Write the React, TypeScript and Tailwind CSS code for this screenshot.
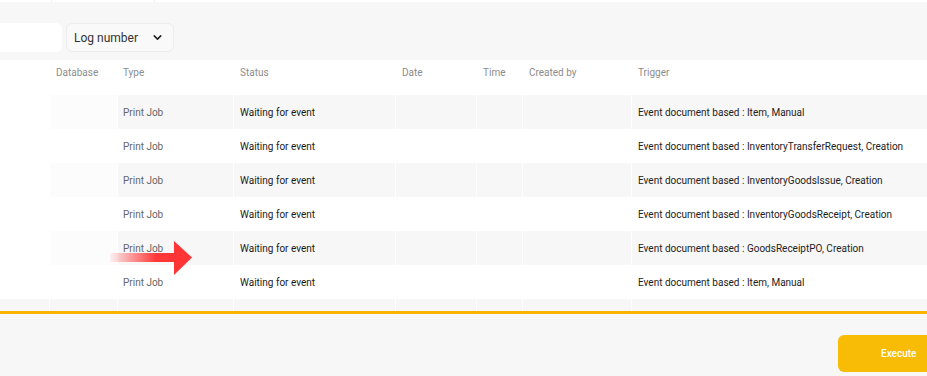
import { ChevronDown } from "lucide-react";

const jobs = [
    "Event document based : Item, Manual",
    "Event document based : InventoryTransferRequest, Creation",
    "Event document based : InventoryGoodsIssue, Creation",
    "Event document based : InventoryGoodsReceipt, Creation",
    "Event document based : GoodsReceiptPO, Creation",
    "Event document based : Item, Manual",
];

// column widths: sticky | Database | Type | Status | Date | Time | Created by | Trigger
const cols = ["w-[50px]", "w-[68px]", "w-[116px]", "w-[162px]", "w-[81px]", "w-[46px]", "w-[109px]"];

function Arrow() {
    return (
        <svg className="absolute left-[110px] top-[241px]" width="82" height="34" viewBox="0 0 82 34">
            <defs>
                <linearGradient id="shaft" x1="0" x2="1" y1="0" y2="0">
                    <stop offset="0" stopColor="#ff3a3a" stopOpacity="0.05" />
                    <stop offset="0.7" stopColor="#ff3a3a" stopOpacity="1" />
                    <stop offset="1" stopColor="#ff3535" />
                </linearGradient>
            </defs>
            <rect x="0" y="12" width="65" height="9" fill="url(#shaft)" />
            <polygon points="64,0 82,16.5 64,34" fill="#ff3535" />
        </svg>
    );
}

export default function App() {
    return (
        <div className="relative w-[927px] h-[376px] overflow-hidden bg-[#f7f7f7] font-['Roboto',sans-serif] flex flex-col">
            {/* Top strip from the panel above */}
            <div className="h-[2px] bg-white flex shrink-0">
                <div className="w-[52px] border-r border-[#eeeeee]" />
                <div className="w-[103px] border-r border-[#eeeeee]" />
            </div>

            {/* Toolbar */}
            <div className="h-[58px] shrink-0 flex items-start pt-[21px] gap-[4px]">
                <div className="w-[62px] h-[29px] bg-white rounded-r-md" />
                <div className="w-[108px] h-[29px] bg-[#f9f9f9] border border-[#ececec] rounded-md flex items-center justify-between pl-[7px] pr-[9px]">
                    <span className="text-[12px] text-[#333]">Log number</span>
                    <ChevronDown size={13} strokeWidth={2.8} className="text-[#222]" />
                </div>
            </div>

            {/* Header */}
            <div className="h-[35px] shrink-0 bg-white flex text-[10px] text-[#8c8c8c] pt-[5px]">
                <div className={cols[0]} />
                <div className={`${cols[1]} pl-[6px]`}>Database</div>
                <div className={`${cols[2]} pl-[5px]`}>Type</div>
                <div className={`${cols[3]} pl-[6px]`}>Status</div>
                <div className={`${cols[4]} pl-[6px]`}>Date</div>
                <div className={`${cols[5]} pl-[6px]`}>Time</div>
                <div className={`${cols[6]} pl-[6px]`}>Created by</div>
                <div className="flex-1 pl-[6px]">Trigger</div>
            </div>

            {/* Rows */}
            {jobs.map((trigger, i) => {
                const odd = i % 2 === 0;
                return (
                    <div
                        key={i}
                        className={`h-[34px] shrink-0 flex text-[10px] ${odd ? "bg-[#f7f7f7] divide-x divide-white" : "bg-white"}`}
                    >
                        <div className={`${cols[0]} bg-white`} />
                        <div className={`${cols[1]} ${odd ? "bg-[#fcfcfc]" : ""}`} />
                        <div className={`${cols[2]} pl-[5px] flex items-center text-[#666]`}>Print Job</div>
                        <div className={`${cols[3]} pl-[6px] flex items-center text-[#1a1a1a]`}>Waiting for event</div>
                        <div className={cols[4]} />
                        <div className={cols[5]} />
                        <div className={cols[6]} />
                        <div className="flex-1 pl-[6px] flex items-center text-[#222] whitespace-nowrap">{trigger}</div>
                    </div>
                );
            })}

            {/* Partial row */}
            <div className="h-[12px] shrink-0 flex bg-[#f7f7f7] divide-x divide-white">
                {cols.map((c, i) => (
                    <div key={i} className={c} />
                ))}
                <div className="flex-1" />
            </div>

            <div className="h-[3px] shrink-0 bg-[#f7b500]" />

            {/* Footer */}
            <div className="flex-1 flex justify-end items-start pt-[21px]">
                <button className="w-[130px] h-[37px] -mr-[41px] bg-[#f9bc06] rounded-md text-white text-[10px] font-medium flex items-center pl-[43px]">
                    Execute
                </button>
            </div>

            <Arrow />
        </div>
    );
}
